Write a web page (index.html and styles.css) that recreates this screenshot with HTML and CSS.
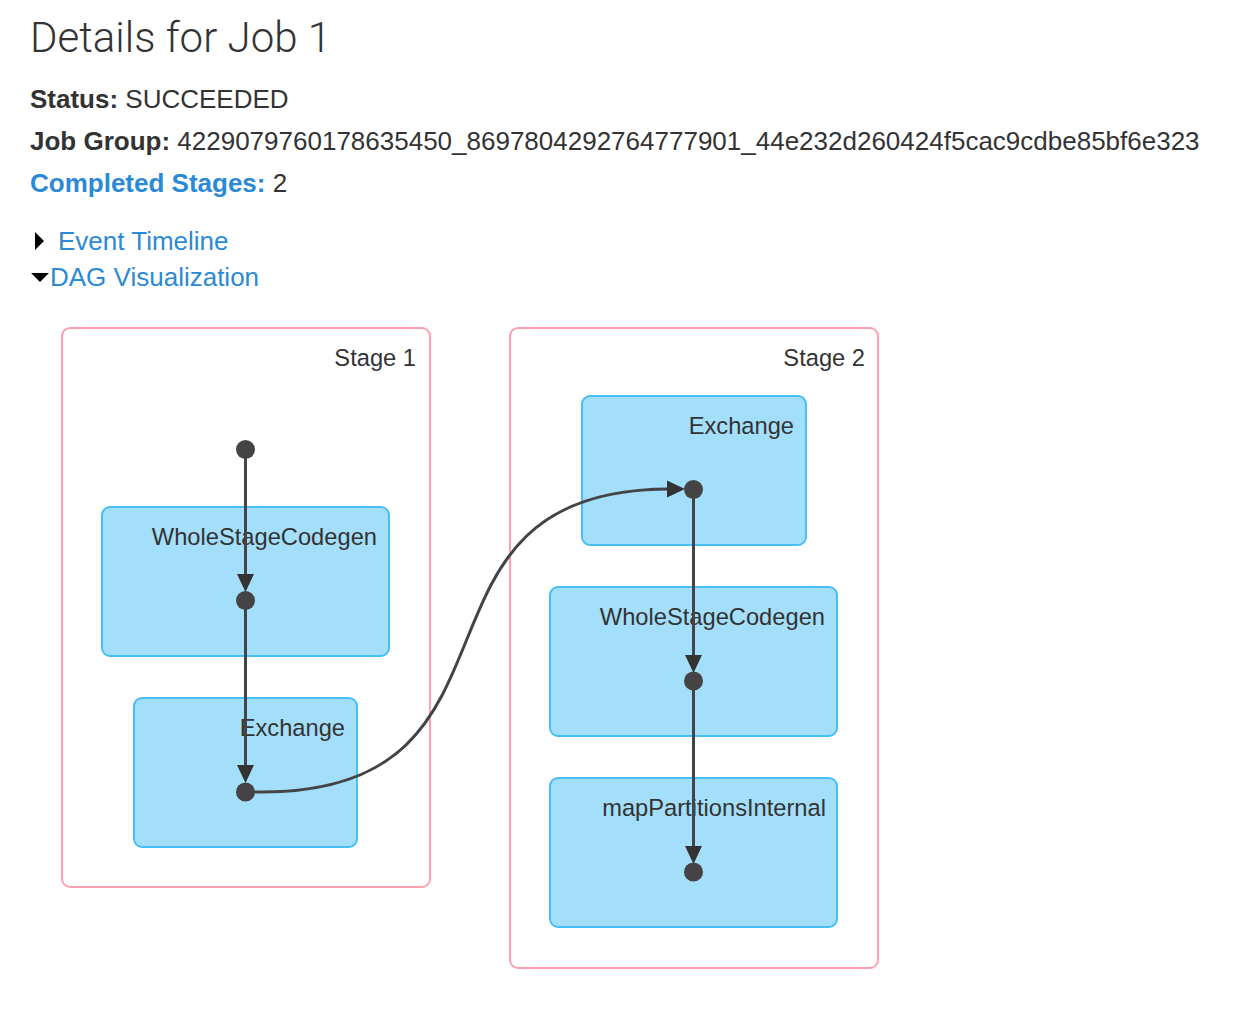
FILE: index.html
```html
<!DOCTYPE html>
<html>
<head>
    <title>Details for Job 1</title>
    <link rel="stylesheet" href="styles.css">
</head>
<body>
    <h3 class="page-title">Details for Job 1</h3>

    <ul class="summary">
        <li><strong>Status:</strong> SUCCEEDED</li>
        <li><strong>Job Group:</strong> 4229079760178635450_8697804292764777901_44e232d260424f5cac9cdbe85bf6e323</li>
        <li><a href="#completed"><strong>Completed Stages:</strong></a> 2</li>
    </ul>

    <div class="toggles">
        <div class="expand">
            <span class="arrow-closed"></span>
            <a href="#timeline">Event Timeline</a>
        </div>
        <div class="expand">
            <span class="arrow-open"></span><a href="#dag">DAG Visualization</a>
        </div>
    </div>

    <!-- DAG: coordinates inside the svg are page coordinates -->
    <svg class="dag" width="870" height="680" viewBox="30 310 870 680">
        <g class="stage">
            <rect x="62" y="328" width="368" height="559" rx="8" ry="8"></rect>
            <text x="416" y="366" text-anchor="end">Stage 1</text>
        </g>
        <g class="stage">
            <rect x="510" y="328" width="368" height="640" rx="8" ry="8"></rect>
            <text x="865" y="366" text-anchor="end">Stage 2</text>
        </g>

        <g class="op">
            <rect x="102" y="507" width="287" height="149" rx="8" ry="8"></rect>
            <text x="377" y="545" text-anchor="end">WholeStageCodegen</text>
        </g>
        <g class="op">
            <rect x="134" y="698" width="223" height="149" rx="8" ry="8"></rect>
            <text x="345" y="736" text-anchor="end">Exchange</text>
        </g>
        <g class="op">
            <rect x="582" y="396" width="224" height="149" rx="8" ry="8"></rect>
            <text x="794" y="434" text-anchor="end">Exchange</text>
        </g>
        <g class="op">
            <rect x="550" y="587" width="287" height="149" rx="8" ry="8"></rect>
            <text x="825" y="625" text-anchor="end">WholeStageCodegen</text>
        </g>
        <g class="op">
            <rect x="550" y="778" width="287" height="149" rx="8" ry="8"></rect>
            <text x="826" y="816" text-anchor="end">mapPartitionsInternal</text>
        </g>

        <g class="edges">
            <path d="M245.5,449 V576"></path>
            <path d="M245.5,600 V767"></path>
            <path d="M245.5,792 H262 C548,792 385,489 670,489"></path>
            <path d="M693.5,489 V657"></path>
            <path d="M693.5,681 V848"></path>
        </g>
        <g class="heads">
            <polygon points="237,574 254,574 245.5,592"></polygon>
            <polygon points="237,765 254,765 245.5,783"></polygon>
            <polygon points="667,480.5 667,497.5 685,489"></polygon>
            <polygon points="685,655 702,655 693.5,673"></polygon>
            <polygon points="685,846 702,846 693.5,864"></polygon>
        </g>
        <g class="dots">
            <circle cx="245.5" cy="449.5" r="9.5"></circle>
            <circle cx="245.5" cy="600.5" r="9.5"></circle>
            <circle cx="245.5" cy="792" r="9.5"></circle>
            <circle cx="693.5" cy="489.5" r="9.5"></circle>
            <circle cx="693.5" cy="681" r="9.5"></circle>
            <circle cx="693.5" cy="872" r="9.5"></circle>
        </g>
    </svg>
</body>
</html>
```

FILE: styles.css
```css
body, html {
    margin: 0;
    padding: 0;
    background: #fff;
}

body {
    padding: 0 30px;
    font-family: 'Liberation Sans', Arial, sans-serif;
    font-size: 26px;
    color: #333;
}

a {
    color: #2b8ad3;
    text-decoration: none;
}

.page-title {
    margin: 0 0 3px 0;
    font-family: Roboto, 'Liberation Sans', sans-serif;
    font-weight: 300;
    font-size: 42px;
    line-height: 75px;
    color: #333;
}

.summary {
    list-style: none;
    margin: 0 0 19px 0;
    padding: 0;
}

.summary li {
    line-height: 42px;
    white-space: nowrap;
}

.expand {
    display: flex;
    align-items: center;
    line-height: 36px;
}

.arrow-closed {
    width: 0;
    height: 0;
    border-top: 9px solid transparent;
    border-bottom: 9px solid transparent;
    border-left: 9px solid #000;
    margin: 0 14px 0 5px;
}

.arrow-open {
    width: 0;
    height: 0;
    border-left: 9px solid transparent;
    border-right: 9px solid transparent;
    border-top: 9px solid #000;
    margin: 0 1px 0 1px;
}

.dag {
    display: block;
    margin-top: 15px;
    font-family: 'Liberation Sans', Arial, sans-serif;
    font-size: 23.7px;
}

.dag text {
    fill: #333;
}

.stage rect {
    fill: #fff;
    stroke: #ff9fb1;
    stroke-width: 2px;
}

.op rect {
    fill: #a3dffb;
    stroke: #45bff5;
    stroke-width: 2px;
}

.edges path {
    fill: none;
    stroke: #444;
    stroke-width: 3px;
}

.heads polygon {
    fill: #333;
}

.dots circle {
    fill: #444;
}
```
